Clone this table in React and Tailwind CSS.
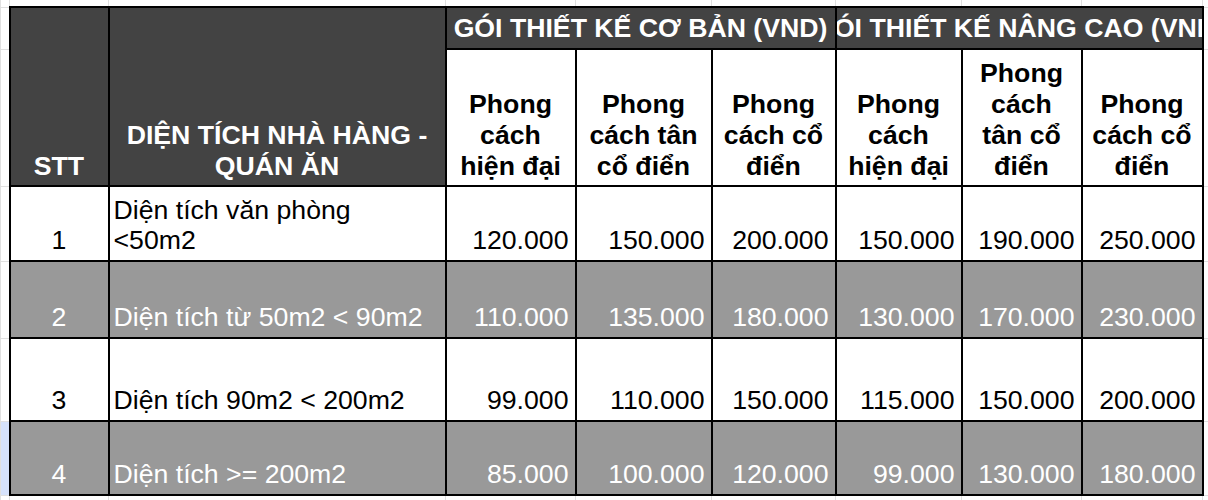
import React from 'react'

// gia thiet ke nha hang - quan an, chup tu bang tinh
const rows = [
  {
    stt: '1',
    area: ['Diện tích văn phòng', '<50m2'],
    vals: ['120.000', '150.000', '200.000', '150.000', '190.000', '250.000'],
    gray: false,
    h: 'h-[75px]',
  },
  {
    stt: '2',
    area: ['Diện tích từ 50m2 < 90m2'],
    vals: ['110.000', '135.000', '180.000', '130.000', '170.000', '230.000'],
    gray: true,
    h: 'h-[77px]',
  },
  {
    stt: '3',
    area: ['Diện tích 90m2 < 200m2'],
    vals: ['99.000', '110.000', '150.000', '115.000', '150.000', '200.000'],
    gray: false,
    h: 'h-[83px]',
  },
  {
    stt: '4',
    area: ['Diện tích >= 200m2'],
    vals: ['85.000', '100.000', '120.000', '99.000', '130.000', '180.000'],
    gray: true,
    h: 'h-[74px]',
    selected: true,
  },
]

const styles = [
  ['Phong', 'cách', 'hiện đại'],
  ['Phong', 'cách tân', 'cổ điển'],
  ['Phong', 'cách cổ', 'điển'],
  ['Phong', 'cách', 'hiện đại'],
  ['Phong', 'cách', 'tân cổ', 'điển'],
  ['Phong', 'cách cổ', 'điển'],
]

const grid = 'border border-[#e0e0e0] p-0'
const cell = 'border-2 border-black p-0 align-bottom'

export default function App() {
  return (
    <div className="w-[1208px] h-[500px] overflow-hidden bg-white font-['Liberation_Sans',Arial,sans-serif] text-[26.67px] text-black">
      <table className="w-[1208px] table-fixed border-collapse">
        <colgroup>
          <col className="w-[9px]" />
          <col className="w-[99px]" />
          <col className="w-[337px]" />
          <col className="w-[130px]" />
          <col className="w-[136px]" />
          <col className="w-[124px]" />
          <col className="w-[126px]" />
          <col className="w-[120px]" />
          <col className="w-[121px]" />
          <col className="w-[6px]" />
        </colgroup>
        <tbody>
          {/* dong trong phia tren */}
          <tr className="h-[7px]">
            {Array.from({ length: 10 }).map((_, i) => (
              <td key={i} className={`${grid} border-t-0`} />
            ))}
          </tr>

          {/* tieu de nhom */}
          <tr className="h-[42px]">
            <td className={grid} />
            <td rowSpan={2} className={`${cell} bg-[#434343] text-white font-bold text-center leading-[31px] pb-[3px]`}>
              STT
            </td>
            <td rowSpan={2} className={`${cell} bg-[#434343] text-white font-bold text-center leading-[31px] pb-[3px]`}>
              DIỆN TÍCH NHÀ HÀNG -<br />QUÁN ĂN
            </td>
            <td colSpan={3} className={`${cell} align-middle bg-[#434343] text-white font-bold`}>
              <div className="w-full overflow-hidden flex justify-center whitespace-nowrap leading-[31px]">
                <span>GÓI THIẾT KẾ CƠ BẢN (VND)</span>
              </div>
            </td>
            <td colSpan={3} className={`${cell} align-middle bg-[#434343] text-white font-bold`}>
              <div className="w-full overflow-hidden flex justify-center whitespace-nowrap leading-[31px]">
                <span>GÓI THIẾT KẾ NÂNG CAO (VND)</span>
              </div>
            </td>
            <td className={grid} />
          </tr>

          {/* ten phong cach */}
          <tr className="h-[137px]">
            <td className={grid} />
            {styles.map((lines, i) => (
              <td key={i} className={`${cell} bg-white font-bold text-center leading-[31px] pb-[3px]`}>
                {lines.map((l, j) => (
                  <div key={j} className="whitespace-nowrap">
                    {l}
                  </div>
                ))}
              </td>
            ))}
            <td className={grid} />
          </tr>

          {rows.map((r) => {
            const bg = r.gray ? 'bg-[#999999] text-white' : 'bg-white text-black'
            return (
              <tr key={r.stt} className={r.h}>
                <td className={`${grid} ${r.selected ? 'bg-[#d6e2fb]' : ''}`} />
                <td className={`${cell} ${bg} text-center leading-[30px] pb-[5px]`}>{r.stt}</td>
                <td className={`${cell} ${bg} text-left leading-[30px] pl-[4px] pb-[5px]`}>
                  {r.area.map((a, j) => (
                    <div key={j} className="whitespace-nowrap">
                      {a}
                    </div>
                  ))}
                </td>
                {r.vals.map((v, j) => (
                  <td key={j} className={`${cell} ${bg} text-right leading-[30px] pr-[6px] pb-[5px] whitespace-nowrap`}>
                    {v}
                  </td>
                ))}
                <td className={grid} />
              </tr>
            )
          })}

          <tr className="h-[20px]">
            {Array.from({ length: 10 }).map((_, i) => (
              <td key={i} className={grid} />
            ))}
          </tr>
        </tbody>
      </table>
    </div>
  )
}
